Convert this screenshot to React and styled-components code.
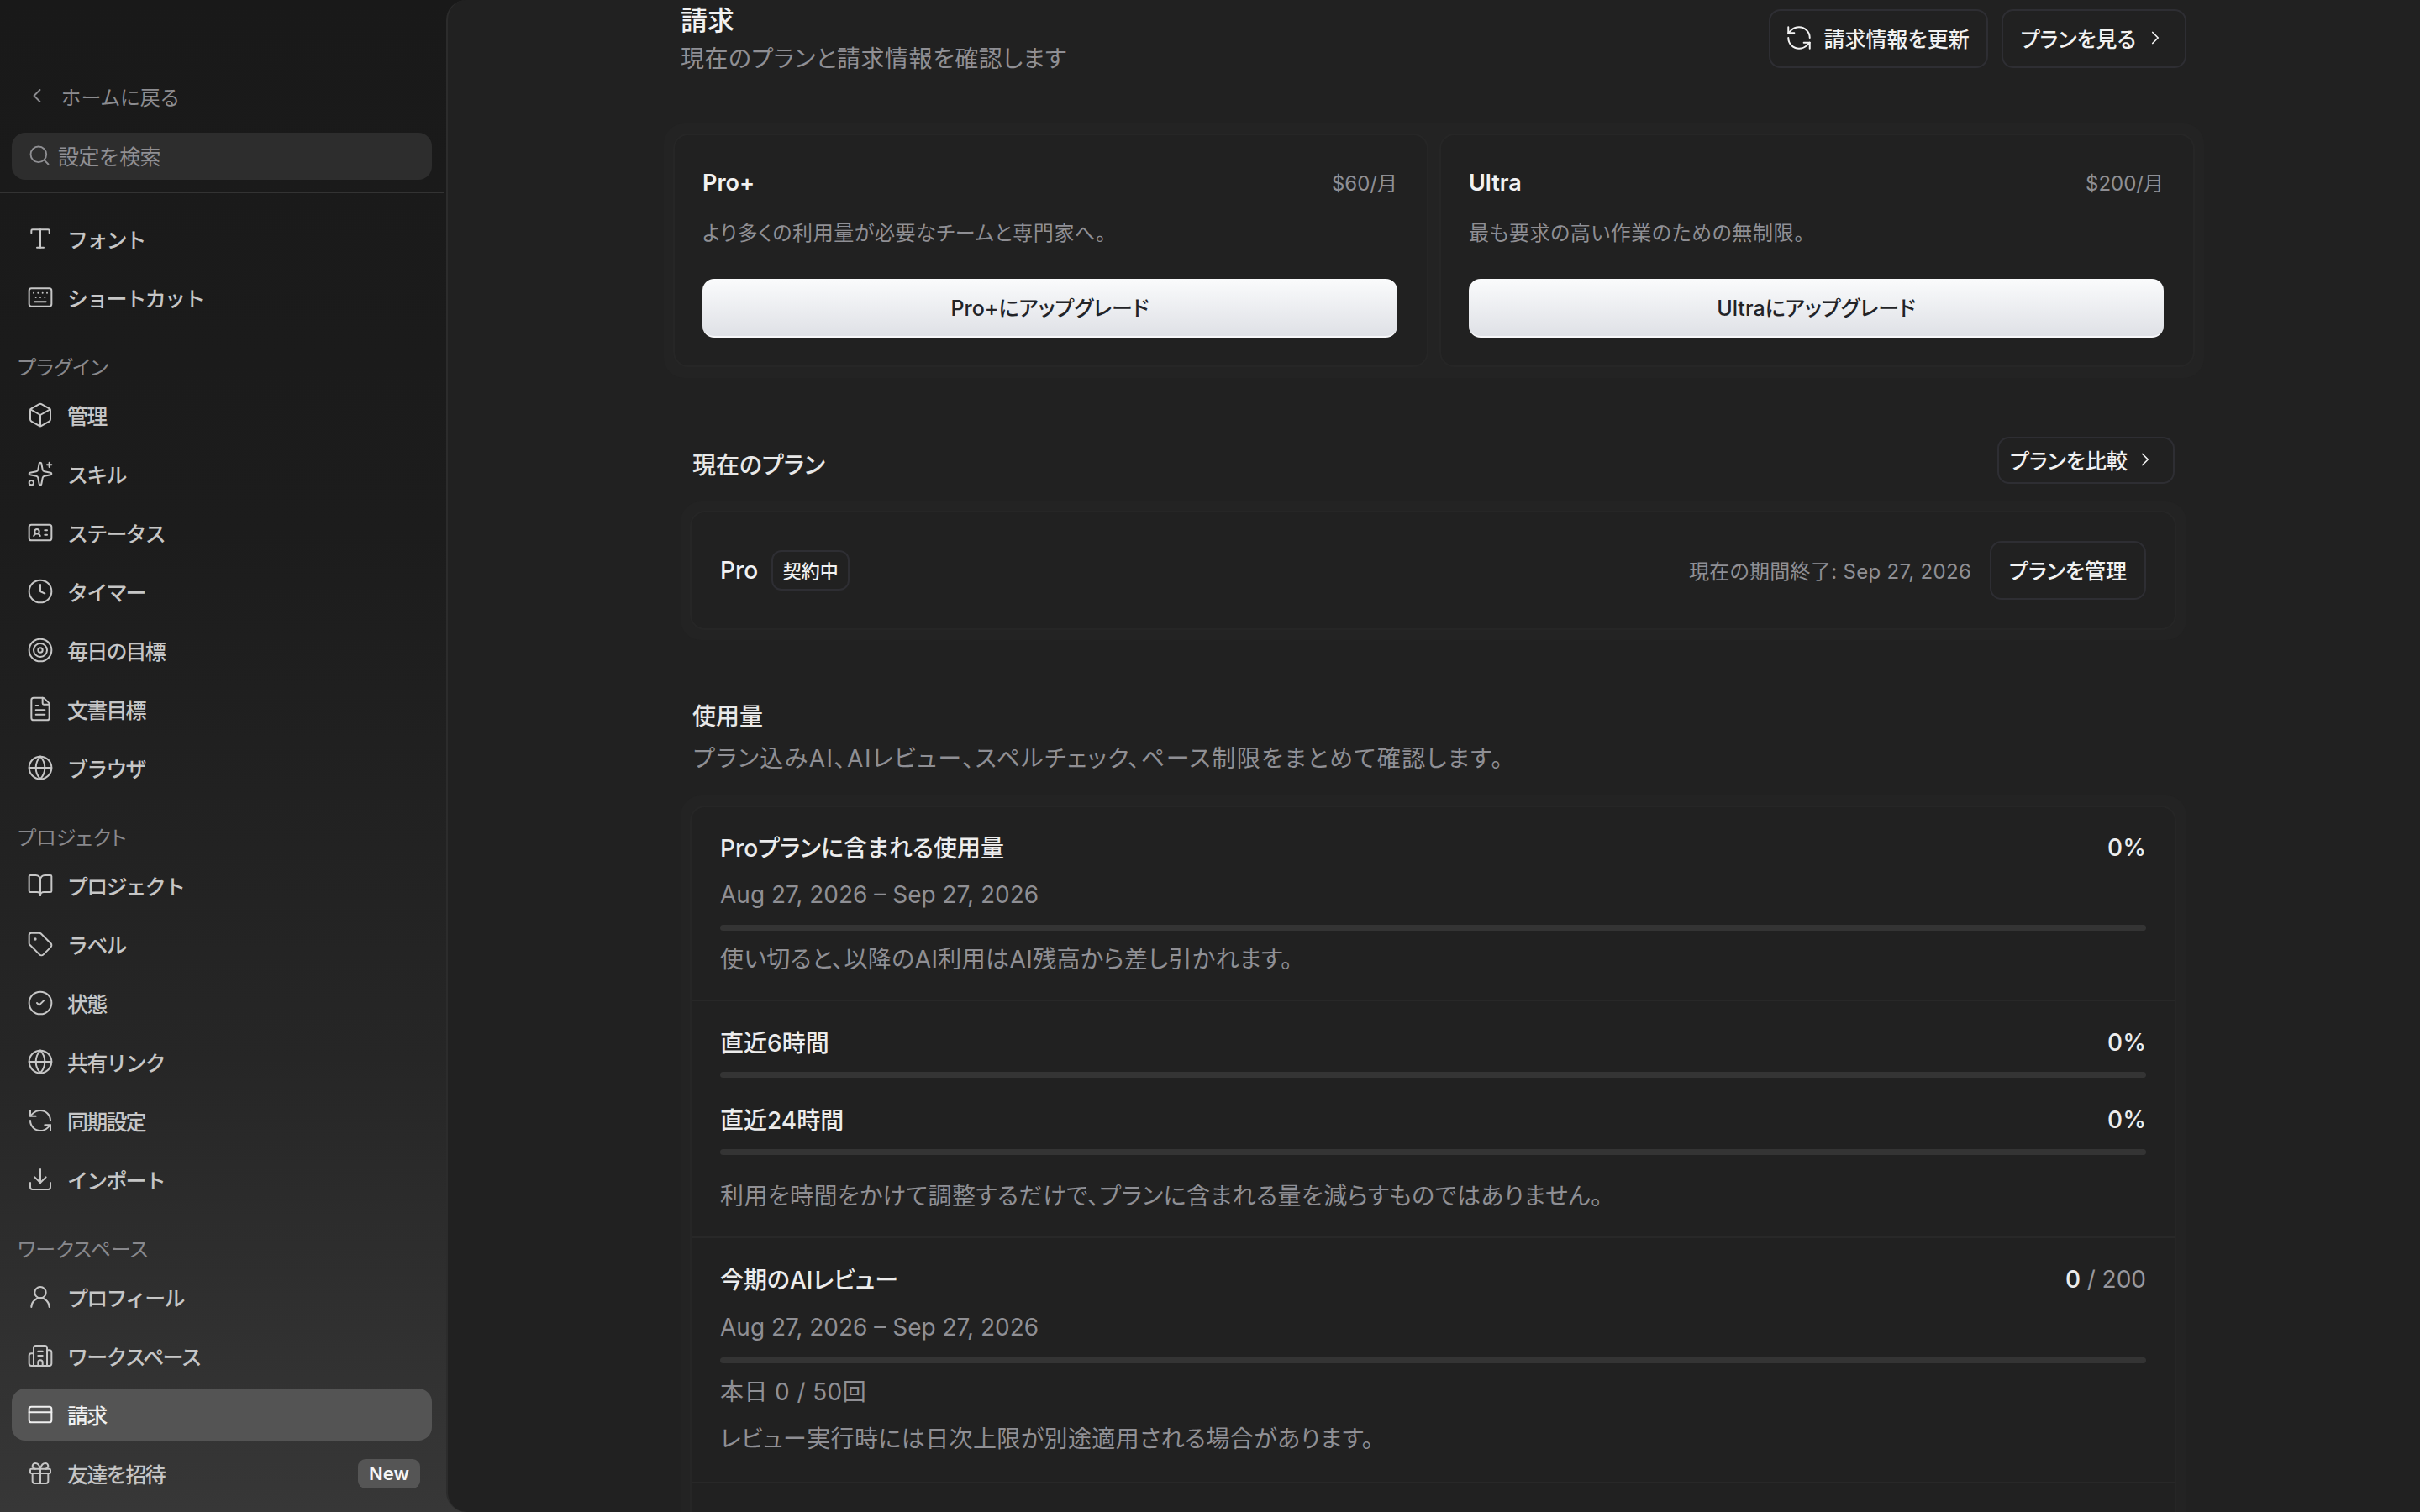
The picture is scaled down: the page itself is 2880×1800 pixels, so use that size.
import styled, { createGlobalStyle } from 'styled-components';
import {
  BookOpen,
  Box,
  Building2,
  ChevronLeft,
  ChevronRight,
  CircleCheck,
  Clock,
  CreditCard,
  Download,
  FileText,
  Gift,
  Globe,
  IdCard,
  Keyboard,
  RefreshCcw,
  Search,
  Sparkles,
  Tag,
  Target,
  Type,
  UserRound,
} from 'lucide-react';

const GlobalStyle = createGlobalStyle`
  html, body {
    margin: 0;
    padding: 0;
    background: #191919;
  }
  * {
    box-sizing: border-box;
  }
  body {
    font-family: Inter, 'Noto Sans CJK JP', sans-serif;
    font-feature-settings: 'palt';
    -webkit-font-smoothing: antialiased;
  }
`;

const NAV = [
  {
    items: [
      { icon: Type, label: 'フォント' },
      { icon: Keyboard, label: 'ショートカット' },
    ],
  },
  {
    title: 'プラグイン',
    items: [
      { icon: Box, label: '管理' },
      { icon: Sparkles, label: 'スキル' },
      { icon: IdCard, label: 'ステータス' },
      { icon: Clock, label: 'タイマー' },
      { icon: Target, label: '毎日の目標' },
      { icon: FileText, label: '文書目標' },
      { icon: Globe, label: 'ブラウザ' },
    ],
  },
  {
    title: 'プロジェクト',
    items: [
      { icon: BookOpen, label: 'プロジェクト' },
      { icon: Tag, label: 'ラベル' },
      { icon: CircleCheck, label: '状態' },
      { icon: Globe, label: '共有リンク' },
      { icon: RefreshCcw, label: '同期設定' },
      { icon: Download, label: 'インポート' },
    ],
  },
  {
    title: 'ワークスペース',
    items: [
      { icon: UserRound, label: 'プロフィール' },
      { icon: Building2, label: 'ワークスペース' },
      { icon: CreditCard, label: '請求', active: true },
      { icon: Gift, label: '友達を招待', badge: 'New' },
    ],
  },
];

const PLANS = [
  { name: 'Pro+', price: '$60/月', desc: 'より多くの利用量が必要なチームと専門家へ。' },
  { name: 'Ultra', price: '$200/月', desc: '最も要求の高い作業のための無制限。' },
];

const App = () => {
  return (
    <>
      <GlobalStyle />
      <Page>
        <SideBar>
          <BackLink>
            <ChevronLeft size={28} strokeWidth={1.6} />
            ホームに戻る
          </BackLink>
          <SearchBox>
            <Search size={28} strokeWidth={1.6} />
            設定を検索
          </SearchBox>
          <SideDivider />
          <NavList>
            {NAV.map((group, i) => (
              <NavGroup key={i}>
                {group.title && <GroupTitle>{group.title}</GroupTitle>}
                {group.items.map((item) => (
                  <NavItem key={item.label} $active={item.active}>
                    <item.icon size={32} strokeWidth={1.5} />
                    <NavLabel>{item.label}</NavLabel>
                    {item.badge && <NewBadge>{item.badge}</NewBadge>}
                  </NavItem>
                ))}
              </NavGroup>
            ))}
          </NavList>
        </SideBar>

        <Main>
          <Content>
            <HeaderRow>
              <div>
                <PageTitle>請求</PageTitle>
                <PageSub>現在のプランと請求情報を確認します</PageSub>
              </div>
              <HeaderActions>
                <RefreshBtn>
                  <RefreshCcw size={34} strokeWidth={1.4} />
                  請求情報を更新
                </RefreshBtn>
                <PlansBtn>
                  プランを見る
                  <ChevronRight size={26} strokeWidth={1.6} />
                </PlansBtn>
              </HeaderActions>
            </HeaderRow>

            <PlanGrid>
              {PLANS.map((plan) => (
                <PlanCard key={plan.name}>
                  <PlanTop>
                    <PlanName>{plan.name}</PlanName>
                    <PlanPrice>{plan.price}</PlanPrice>
                  </PlanTop>
                  <PlanDesc>{plan.desc}</PlanDesc>
                  <UpgradeBtn>{plan.name}にアップグレード</UpgradeBtn>
                </PlanCard>
              ))}
            </PlanGrid>

            <CurrentHead>
              <SectionTitle>現在のプラン</SectionTitle>
              <CompareBtn>
                プランを比較
                <ChevronRight size={26} strokeWidth={1.6} />
              </CompareBtn>
            </CurrentHead>
            <OuterCard>
              <CurrentInner>
                <CurrentName>Pro</CurrentName>
                <StatusBadge>契約中</StatusBadge>
                <PeriodEnd>現在の期間終了: Sep 27, 2026</PeriodEnd>
                <ManageBtn>プランを管理</ManageBtn>
              </CurrentInner>
            </OuterCard>

            <UsageHead>
              <SectionTitle>使用量</SectionTitle>
              <UsageDesc>プラン込みAI、AIレビュー、スペルチェック、ペース制限をまとめて確認します。</UsageDesc>
            </UsageHead>
            <UsageOuter>
              <UsageInner>
                <UsageSection>
                  <UsageRow>
                    <UsageLabel>Proプランに含まれる使用量</UsageLabel>
                    <UsageValue>0%</UsageValue>
                  </UsageRow>
                  <DateLine>Aug 27, 2026 – Sep 27, 2026</DateLine>
                  <Bar />
                  <Note>使い切ると、以降のAI利用はAI残高から差し引かれます。</Note>
                </UsageSection>

                <UsageSection>
                  <UsageRow>
                    <UsageLabel>直近6時間</UsageLabel>
                    <UsageValue>0%</UsageValue>
                  </UsageRow>
                  <Bar />
                  <UsageRow $next>
                    <UsageLabel>直近24時間</UsageLabel>
                    <UsageValue>0%</UsageValue>
                  </UsageRow>
                  <Bar />
                  <Note $wide>利用を時間をかけて調整するだけで、プランに含まれる量を減らすものではありません。</Note>
                </UsageSection>

                <UsageSection $tall>
                  <UsageRow>
                    <UsageLabel>今期のAIレビュー</UsageLabel>
                    <UsageValue>
                      0 <Muted>/ 200</Muted>
                    </UsageValue>
                  </UsageRow>
                  <DateLine $review>Aug 27, 2026 – Sep 27, 2026</DateLine>
                  <Bar />
                  <Note>本日 0 / 50回</Note>
                  <Note $tight>レビュー実行時には日次上限が別途適用される場合があります。</Note>
                </UsageSection>

                <UsageSection>
                  <UsageRow>
                    <UsageLabel>今期のスペルチェック</UsageLabel>
                  </UsageRow>
                </UsageSection>
              </UsageInner>
            </UsageOuter>
          </Content>
        </Main>
      </Page>
    </>
  );
};

const Page = styled.div`
  display: flex;
  width: 2880px;
  height: 1800px;
  overflow: hidden;
  background: linear-gradient(180deg, #191919 0%, #1c1c1c 35%, #262626 70%, #373737 100%);
`;

//SideBar
const SideBar = styled.aside`
  width: 531px;
  flex: none;
  padding-top: 94px;
`;
const BackLink = styled.div`
  display: flex;
  align-items: center;
  gap: 15px;
  height: 40px;
  padding-left: 30px;
  font-size: 24px;
  letter-spacing: 0.5px;
  color: #8c8c90;
`;
const SearchBox = styled.div`
  display: flex;
  align-items: center;
  gap: 8px;
  width: 500px;
  height: 56px;
  margin: 24px 0 0 14px;
  padding: 0 0 2px 19px;
  border-radius: 16px;
  background: #2d2d2d;
  font-size: 25px;
  font-feature-settings: normal;
  letter-spacing: -0.6px;
  color: #8f8f93;
`;
const SideDivider = styled.div`
  width: 528px;
  height: 2px;
  margin-top: 14px;
  background: #333333;
`;
const NavList = styled.nav`
  padding: 23px 17px 0 14px;
`;
const NavGroup = styled.div`
  display: flex;
  flex-direction: column;
  gap: 8px;
  & + & {
    margin-top: 33px;
  }
`;
const GroupTitle = styled.div`
  height: 36px;
  line-height: 40px;
  margin-bottom: 1px;
  padding-left: 7px;
  font-size: 24px;
  letter-spacing: 0.2px;
  color: #88888c;
`;
const NavItem = styled.div`
  display: flex;
  align-items: center;
  gap: 16px;
  height: 62px;
  padding: 0 14px 0 18px;
  border-radius: 16px;
  background: ${(props) => (props.$active ? '#545454' : 'transparent')};
  color: ${(props) => (props.$active ? '#f0f0f0' : '#c6c6c6')};
  svg {
    flex: none;
  }
`;
const NavLabel = styled.span`
  flex: 1;
  font-size: 25px;
  font-feature-settings: normal;
  letter-spacing: -1.8px;
  font-weight: 500;
`;
const NewBadge = styled.span`
  display: flex;
  align-items: center;
  justify-content: center;
  width: 74px;
  height: 35px;
  border-radius: 9px;
  background: #555555;
  font-size: 22px;
  font-weight: 600;
  color: #f5f5f5;
`;

//Main
const Main = styled.main`
  flex: 1;
  height: 1800px;
  overflow: hidden;
  background: #212121;
  border-left: 2px solid #2c2c2c;
  border-radius: 24px 0 0 24px;
`;
const Content = styled.div`
  width: 1792px;
  margin-left: 277px;
`;

//Header
const HeaderRow = styled.div`
  display: flex;
  justify-content: space-between;
  align-items: flex-start;
  height: 88px;
`;
const PageTitle = styled.h1`
  margin: 0;
  font-size: 32px;
  font-weight: 500;
  line-height: 50px;
  color: #f2f2f2;
`;
const PageSub = styled.p`
  margin: 2px 0 0;
  font-size: 28px;
  line-height: 36px;
  letter-spacing: 0.5px;
  color: #8f8f94;
`;
const HeaderActions = styled.div`
  display: flex;
  gap: 16px;
  margin-top: 11px;
`;
const GhostBtn = styled.button`
  display: flex;
  align-items: center;
  gap: 12px;
  height: 70px;
  padding: 0 22px 3px;
  border: 2px solid #2e2e33;
  border-radius: 14px;
  background: transparent;
  font-family: inherit;
  font-feature-settings: inherit;
  font-size: 25px;
  font-weight: 500;
  color: #f2f2f2;
`;
const RefreshBtn = styled(GhostBtn)`
  gap: 13px;
  padding: 0 20px 3px 21px;
  svg {
    margin-left: -4px;
  }
`;
const PlansBtn = styled(GhostBtn)`
  gap: 10px;
  padding: 0 22px 3px 21px;
`;

//Plan cards
const PlanGrid = styled.div`
  display: grid;
  grid-template-columns: 1fr 1fr;
  gap: 13px;
  margin: 59px -21px 0 -20px;
  padding: 12px 11px 13px 11px;
  border-radius: 24px;
  background: #232323;
`;
const PlanCard = styled.div`
  padding: 38px 35px 33px 33px;
  border: 2px solid #262626;
  border-radius: 18px;
  background: #212121;
`;
const PlanTop = styled.div`
  display: flex;
  justify-content: space-between;
  align-items: center;
  height: 36px;
`;
const PlanName = styled.span`
  font-size: 27px;
  font-weight: 600;
  color: #f2f2f2;
`;
const PlanPrice = styled.span`
  margin-bottom: 2px;
  font-size: 24px;
  color: #8f8f94;
`;
const PlanDesc = styled.p`
  margin: 25px 0 0;
  font-size: 24px;
  line-height: 36px;
  letter-spacing: 0.6px;
  color: #8f8f94;
`;
const UpgradeBtn = styled.button`
  display: block;
  width: 100%;
  height: 70px;
  margin-top: 36px;
  padding-bottom: 3px;
  border: none;
  border-bottom: 2px solid #f7f7f9;
  border-radius: 14px;
  background: linear-gradient(180deg, #fafbfc 0%, #dfe1e6 100%);
  font-family: inherit;
  font-feature-settings: inherit;
  font-size: 25px;
  font-weight: 500;
  color: #222327;
`;

//Current plan
const CurrentHead = styled.div`
  display: flex;
  justify-content: space-between;
  align-items: flex-start;
  margin-top: 70px;
  padding: 0 14px 0 14px;
`;
const SectionTitle = styled.h2`
  margin: 16px 0 0;
  font-size: 28px;
  font-weight: 500;
  line-height: 36px;
  color: #e8e8e8;
`;
const CompareBtn = styled(GhostBtn)`
  gap: 8px;
  height: 56px;
  padding: 0 20px 3px 13px;
`;
const OuterCard = styled.div`
  margin-top: 21px;
  padding: 11px 12px 12px 11px;
  border-radius: 24px;
  background: #232323;
`;
const CurrentInner = styled.div`
  display: flex;
  align-items: center;
  height: 142px;
  padding: 0 34px;
  border: 2px solid #262626;
  border-radius: 18px;
  background: #212121;
`;
const CurrentName = styled.span`
  font-size: 28px;
  font-weight: 500;
  color: #f2f2f2;
`;
const StatusBadge = styled.span`
  display: flex;
  align-items: center;
  justify-content: center;
  width: 93px;
  height: 48px;
  margin-left: 16px;
  padding-bottom: 2px;
  border: 2px solid #2e2e33;
  border-radius: 12px;
  font-size: 22px;
  font-weight: 500;
  color: #f2f2f2;
`;
const PeriodEnd = styled.span`
  margin: 0 22px 2px auto;
  font-size: 24px;
  letter-spacing: 0.3px;
  color: #8f8f94;
`;
const ManageBtn = styled(GhostBtn)`
  padding: 0 21px 3px;
`;

//Usage
const UsageHead = styled.div`
  display: flow-root;
  margin-top: 57px;
  padding-left: 14px;
`;
const UsageDesc = styled.p`
  margin: 14px 0 0 1px;
  font-size: 28px;
  line-height: 36px;
  letter-spacing: 1.5px;
  color: #8f8f94;
`;
const UsageOuter = styled.div`
  margin-top: 26px;
  padding: 12px 12px 0 11px;
  border-radius: 24px 24px 0 0;
  background: #232323;
`;
const UsageInner = styled.div`
  border: 2px solid #262626;
  border-bottom: none;
  border-radius: 18px 18px 0 0;
  background: #212121;
`;
const UsageSection = styled.section`
  padding: 29px 34px ${(props) => (props.$tall ? '33px' : '30px')} 34px;
  & + & {
    padding-top: 30px;
    border-top: 2px solid #282828;
  }
`;
const UsageRow = styled.div`
  display: flex;
  justify-content: space-between;
  align-items: center;
  height: 36px;
  margin-top: ${(props) => (props.$next ? '31px' : '0')};
`;
const UsageLabel = styled.span`
  font-size: 28px;
  font-weight: 500;
  color: #ececec;
`;
const UsageValue = styled.span`
  margin-top: 2px;
  font-size: 28px;
  font-weight: 500;
  color: #ececec;
`;
const Muted = styled.span`
  font-weight: 400;
  color: #98989e;
`;
const DateLine = styled.div`
  margin-top: ${(props) => (props.$review ? '22px' : '21px')};
  font-size: 28px;
  line-height: 36px;
  color: #8f8f94;
`;
const Bar = styled.div`
  height: 7px;
  margin-top: 18px;
  border-radius: 4px;
  background: #343434;
`;
const Note = styled.p`
  margin: ${(props) => (props.$wide ? '31px' : props.$tight ? '20px' : '16px')} 0 0;
  font-size: 28px;
  line-height: 36px;
  letter-spacing: 0.4px;
  color: #8f8f94;
`;

export default App;
